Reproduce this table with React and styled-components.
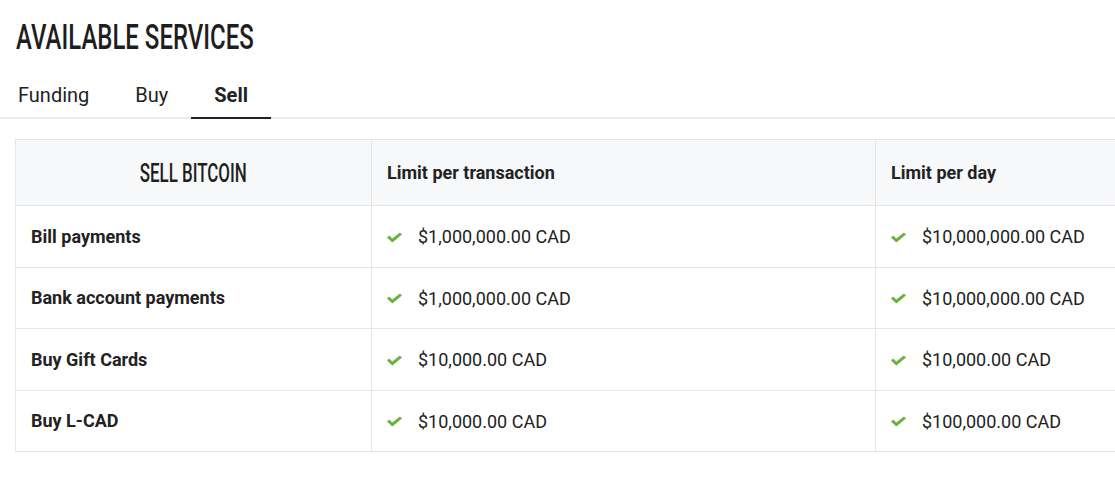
import React, { useState } from "react";
import styled, { createGlobalStyle } from "styled-components";

const Global = createGlobalStyle`
  html, body { margin: 0; padding: 0; background: #fff; }
  body { font-family: Roboto, "Liberation Sans", sans-serif; color: #222; overflow: hidden; }
  * { box-sizing: border-box; }
`;

const Page = styled.div`
  width: 1115px;
  padding-top: 18px;
`;

const Title = styled.h1`
  margin: 0 0 0 16px;
  height: 40px;
  font-family: Roboto, "Liberation Sans", sans-serif;
  font-weight: 500;
  font-size: 35px;
  line-height: 40px;
  color: #1e1e1e;
  display: inline-block;
  transform: scaleX(0.685);
  transform-origin: left center;
  white-space: nowrap;
`;

const TabList = styled.div`
  display: flex;
  margin-top: 14px;
  border-bottom: 2px solid #ececec;
`;

const Tab = styled.button`
  border: 0;
  background: none;
  font-family: Roboto, "Liberation Sans", sans-serif;
  font-size: 20px;
  font-weight: ${(p) => (p.$active ? 700 : 400)};
  color: #222;
  padding: 0 23px;
  height: 47px;
  line-height: 47px;
  margin-bottom: -2px;
  border-bottom: 2px solid ${(p) => (p.$active ? "#222" : "transparent")};
  cursor: pointer;
  &:first-child { padding-left: 18px; }
`;

const TableWrap = styled.div`
  padding: 20px 0 0 15px;
`;

const Table = styled.table`
  border-collapse: collapse;
  table-layout: fixed;
  width: 1364px;
  border: 1px solid #e3e3e3;
`;

const HeadCell = styled.th`
  height: 66px;
  background: #f7f8fa;
  border: 1px solid #e6e6e6;
  font-size: 18px;
  font-weight: 700;
  text-align: left;
  padding: 0 15px;
  color: #222;
`;

const SectionHead = styled(HeadCell)`
  text-align: center;
  font-weight: 400;
`;

const Condensed = styled.span`
  display: inline-block;
  font-size: 26px;
  font-weight: 500;
  color: #1e1e1e;
  transform: scaleX(0.65);
  white-space: nowrap;
`;

const Cell = styled.td`
  height: 61.5px;
  border: 1px solid #e6e6e6;
  padding: 0 15px;
  font-size: 18px;
  font-weight: ${(p) => (p.$label ? 700 : 400)};
  color: #222;
`;

const Value = styled.span`
  display: inline-flex;
  align-items: center;
  gap: 16px;
`;

const CheckIcon = styled.svg`
  flex: none;
  margin-top: 1px;
`;

const Check = () => (
  <CheckIcon width="15" height="11" viewBox="0 0 15 11">
    <path d="M0 5.6 L2.1 3.5 L5.3 6.5 L12.9 0.4 L15 2.5 L5.3 10.4 Z" fill="#6ab23f" />
  </CheckIcon>
);

const rows = [
  ["Bill payments", "$1,000,000.00 CAD", "$10,000,000.00 CAD"],
  ["Bank account payments", "$1,000,000.00 CAD", "$10,000,000.00 CAD"],
  ["Buy Gift Cards", "$10,000.00 CAD", "$10,000.00 CAD"],
  ["Buy L-CAD", "$10,000.00 CAD", "$100,000.00 CAD"],
];

export default function App() {
  const [tab, setTab] = useState("Sell");
  return (
    <Page>
      <Global />
      <Title>AVAILABLE SERVICES</Title>
      <TabList>
        {["Funding", "Buy", "Sell"].map((t) => (
          <Tab key={t} $active={t === tab} onClick={() => setTab(t)}>
            {t}
          </Tab>
        ))}
      </TabList>
      <TableWrap>
        <Table>
          <colgroup>
            <col style={{ width: 356 }} />
            <col style={{ width: 504 }} />
            <col style={{ width: 504 }} />
          </colgroup>
          <thead>
            <tr>
              <SectionHead>
                <Condensed>SELL BITCOIN</Condensed>
              </SectionHead>
              <HeadCell>Limit per transaction</HeadCell>
              <HeadCell>Limit per day</HeadCell>
            </tr>
          </thead>
          <tbody>
            {rows.map((r) => (
              <tr key={r[0]}>
                <Cell $label>{r[0]}</Cell>
                <Cell>
                  <Value>
                    <Check />
                    {r[1]}
                  </Value>
                </Cell>
                <Cell>
                  <Value>
                    <Check />
                    {r[2]}
                  </Value>
                </Cell>
              </tr>
            ))}
          </tbody>
        </Table>
      </TableWrap>
    </Page>
  );
}
